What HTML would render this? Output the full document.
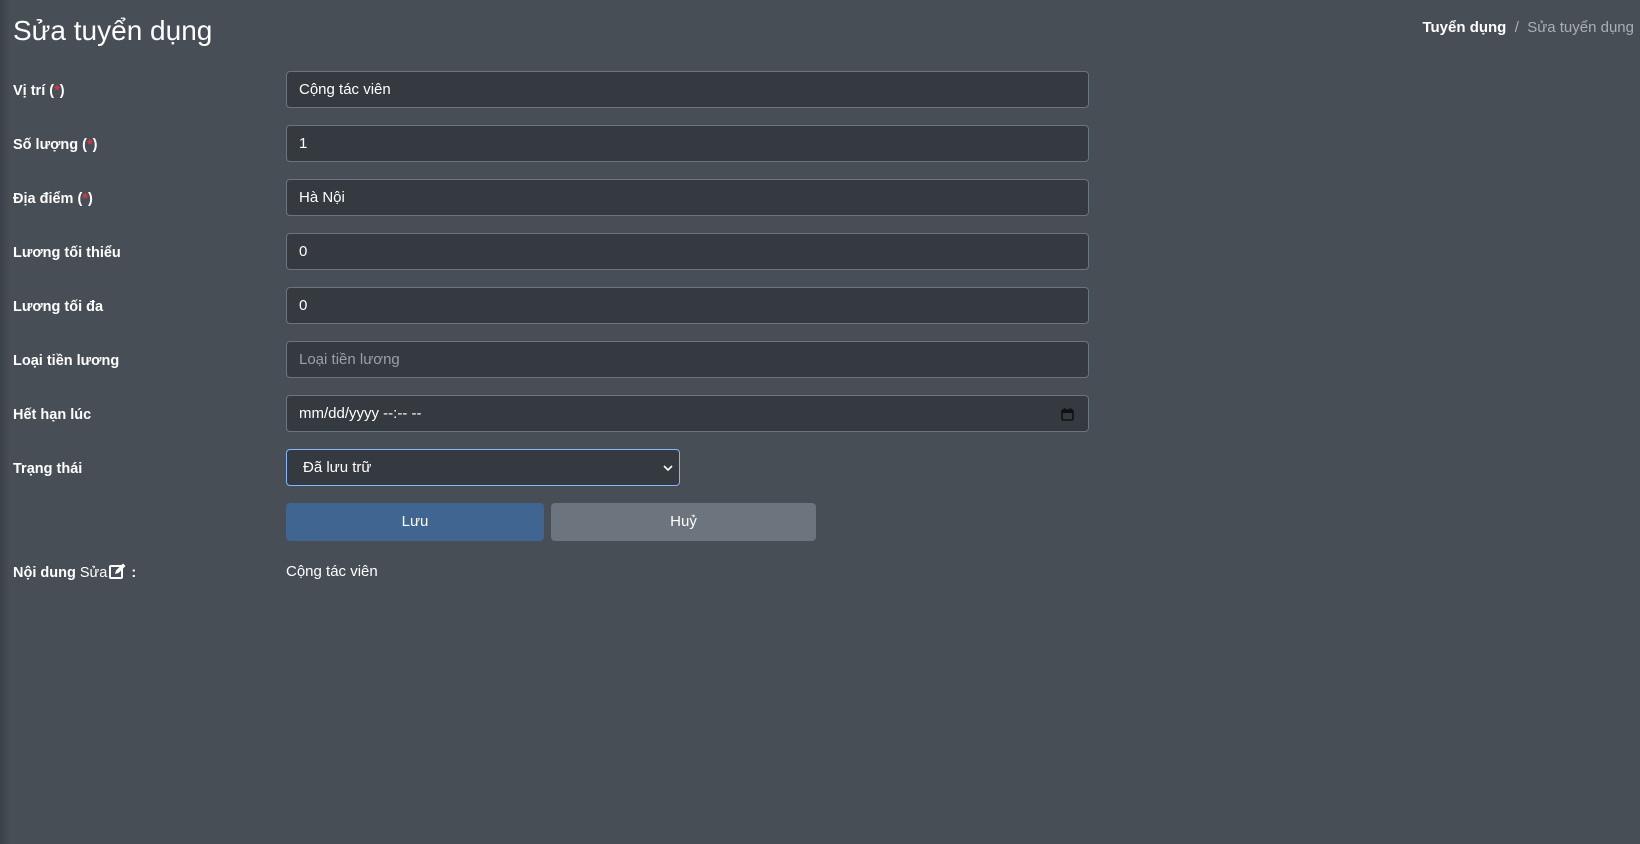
<!DOCTYPE html>
<html><head><meta charset="utf-8"><style>
body{margin:0;width:1640px;height:844px;background:#474e56;font-family:"Liberation Sans","DejaVu Sans",sans-serif;color:#fff;position:relative;overflow:hidden}
.edge{position:absolute;left:0;top:0;bottom:0;width:10px;background:linear-gradient(90deg,#3b4148,#474e56)}
h1{position:absolute;left:13px;top:13px;margin:0;font-weight:400;font-size:28px;line-height:36px}
.bc{position:absolute;right:6px;top:19px;font-size:15px}
.bc b{font-weight:700}.bc span{color:#a9afb5}
.lbl{position:absolute;left:13px;font-weight:700;font-size:14.5px}
.lbl i{color:#dc3545;font-style:normal}
.in{position:absolute;left:286px;width:803px;height:37px;background:#343a40;border:1px solid #6c757d;border-radius:4px;box-sizing:border-box;font-size:15px;line-height:35px;padding-left:12px;color:#fff}
.btn{position:absolute;top:503px;height:38px;border-radius:4px;font-size:15px;text-align:center;line-height:38px}
</style></head><body>
<div class="edge"></div>
<h1>Sửa tuyển dụng</h1>
<div class="bc"><b>Tuyển dụng</b> <span>&nbsp;/&nbsp; Sửa tuyển dụng</span></div>

<div class="lbl" style="top:83px">Vị trí (<i>*</i>)</div>
<div class="in" style="top:71px">Cộng tác viên</div>
<div class="lbl" style="top:137px">Số lượng (<i>*</i>)</div>
<div class="in" style="top:125px">1</div>
<div class="lbl" style="top:191px">Địa điểm (<i>*</i>)</div>
<div class="in" style="top:179px">Hà Nội</div>
<div class="lbl" style="top:245px">Lương tối thiểu</div>
<div class="in" style="top:233px">0</div>
<div class="lbl" style="top:299px">Lương tối đa</div>
<div class="in" style="top:287px">0</div>
<div class="lbl" style="top:353px">Loại tiền lương</div>
<div class="in" style="top:341px;color:#9aa0a6">Loại tiền lương</div>
<div class="lbl" style="top:407px">Hết hạn lúc</div>
<div class="in" style="top:395px">mm/dd/yyyy --:-- --<svg style="position:absolute;right:14px;top:12px" width="13" height="13" viewBox="0 0 13 13"><rect x="1" y="2" width="11" height="10" rx="1.5" fill="none" stroke="#111" stroke-width="1.6"/><rect x="1" y="2" width="11" height="3" fill="#111"/><path d="M3.5 0v3M9.5 0v3" stroke="#111" stroke-width="1.4"/></svg></div>
<div class="lbl" style="top:461px">Trạng thái</div>
<div class="in" style="top:449px;width:394px;border-color:#86b7fe;padding-left:16px">Đã lưu trữ<svg style="position:absolute;right:6px;top:14px" width="10" height="8" viewBox="0 0 10 8"><path d="M1 2l4 4 4-4" fill="none" stroke="#fff" stroke-width="1.6"/></svg></div>
<div class="btn" style="left:286px;width:258px;background:#3f6590">Lưu</div>
<div class="btn" style="left:551px;width:265px;background:#6c757d">Huỷ</div>
<div class="lbl" style="top:563px">Nội dung <span style="font-weight:400">Sửa</span><svg width="18" height="16" viewBox="0 0 18 16" style="vertical-align:-2px;margin-left:2px"><rect x="1" y="3" width="12" height="12" rx="1" fill="none" stroke="#fff" stroke-width="2"/><path d="M6 11l1-3.5 7-7 2.5 2.5-7 7z" fill="#fff"/></svg> :</div>
<div style="position:absolute;left:286px;top:563px;font-size:15px">Cộng tác viên</div>
</body></html>
